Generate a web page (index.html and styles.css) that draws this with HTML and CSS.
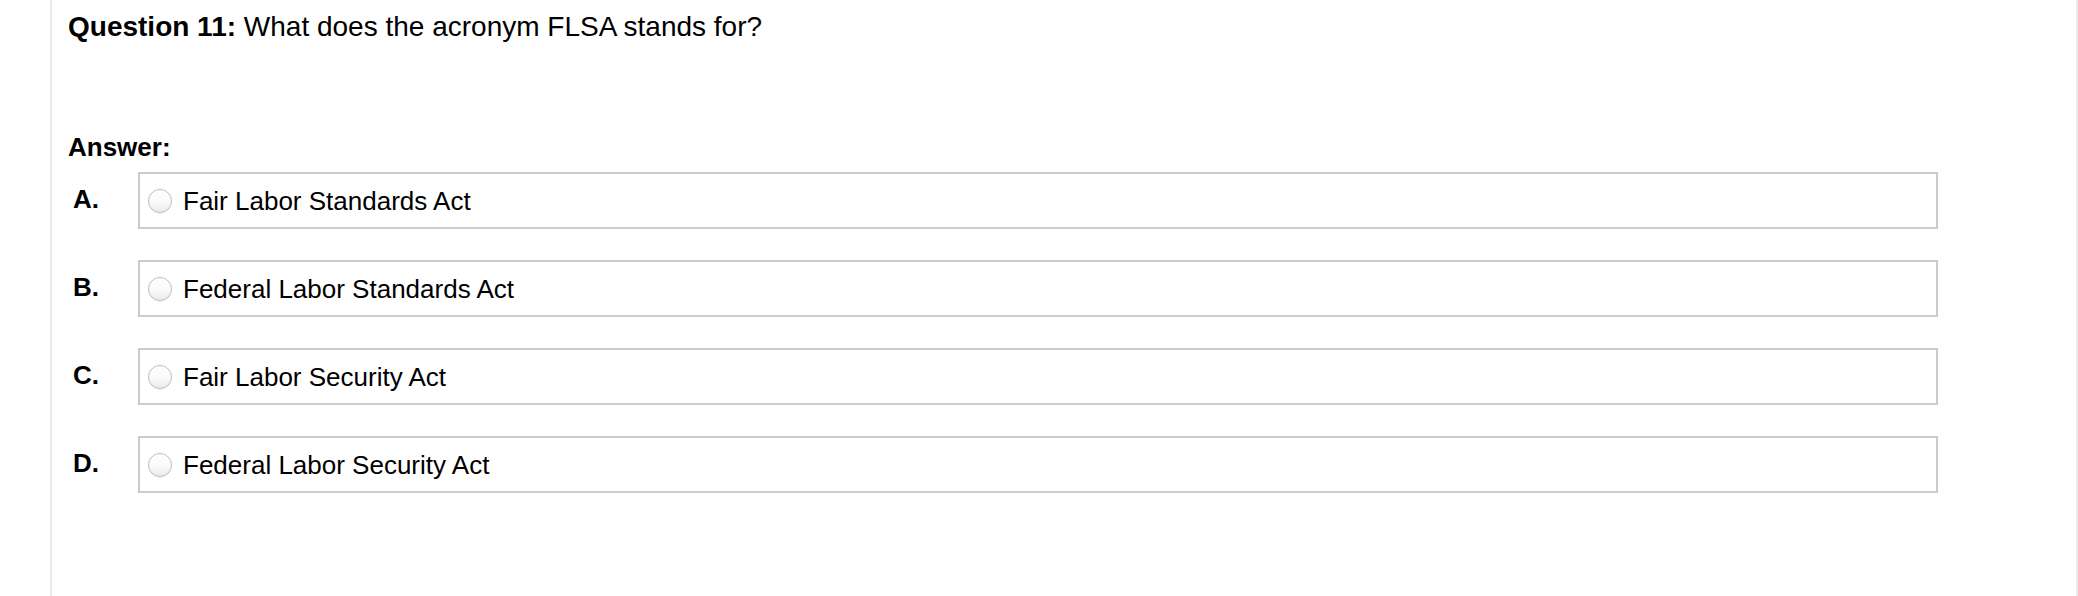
FILE: index.html
```html
<!DOCTYPE html>
<html lang="en">
<head>
<meta charset="utf-8">
<title>Question 11</title>
<link rel="stylesheet" href="styles.css">
</head>
<body>
<div class="panel">
  <p class="question"><strong>Question 11:</strong> What does the acronym FLSA stands for?</p>
  <div class="answer-title">Answer:</div>
  <div class="options">
    <div class="option-row">
      <span class="letter">A.</span>
      <label class="choice"><input type="radio" name="q11" class="radio"><span class="choice-text">Fair Labor Standards Act</span></label>
    </div>
    <div class="option-row">
      <span class="letter">B.</span>
      <label class="choice"><input type="radio" name="q11" class="radio"><span class="choice-text">Federal Labor Standards Act</span></label>
    </div>
    <div class="option-row">
      <span class="letter">C.</span>
      <label class="choice"><input type="radio" name="q11" class="radio"><span class="choice-text">Fair Labor Security Act</span></label>
    </div>
    <div class="option-row">
      <span class="letter">D.</span>
      <label class="choice"><input type="radio" name="q11" class="radio"><span class="choice-text">Federal Labor Security Act</span></label>
    </div>
  </div>
</div>
</body>
</html>
```

FILE: styles.css
```css
html, body {
  margin: 0;
  padding: 0;
  background: #fff;
}

body {
  font-family: "Liberation Sans", Arial, Helvetica, sans-serif;
  color: #000;
}

.panel {
  box-sizing: border-box;
  margin-left: 50px;
  width: 2028px;
  min-height: 596px;
  border-left: 2px solid #ebebeb;
  border-right: 2px solid #ebebeb;
  padding: 11px 0 0 16px;
}

.question {
  margin: 0;
  font-size: 28px;
  line-height: 32px;
}

.question strong {
  font-weight: bold;
}

.answer-title {
  margin-top: 89px;
  font-size: 26px;
  line-height: 30px;
  font-weight: bold;
}

.options {
  margin-top: 10px;
  display: flex;
  flex-direction: column;
  gap: 31px;
}

.option-row {
  display: flex;
  align-items: flex-start;
}

.letter {
  box-sizing: border-box;
  width: 70px;
  padding: 12px 0 0 5px;
  font-size: 26px;
  line-height: 30px;
  font-weight: bold;
}

.choice {
  box-sizing: border-box;
  width: 1800px;
  height: 57px;
  border: 2px solid #cbcbcb;
  display: flex;
  align-items: center;
  gap: 11px;
  padding-left: 8px;
}

.radio {
  -webkit-appearance: none;
  appearance: none;
  box-sizing: border-box;
  width: 24px;
  height: 24px;
  margin: 0;
  border-radius: 50%;
  border: 1px solid #bdbdbd;
  background: linear-gradient(#ffffff 0%, #fbfbfb 50%, #ededed 100%);
  box-shadow: inset 0 1px 1px rgba(255,255,255,0.9), 0 1px 1px rgba(0,0,0,0.06);
  flex: none;
}

.choice-text {
  font-size: 26px;
  line-height: 30px;
}
```
